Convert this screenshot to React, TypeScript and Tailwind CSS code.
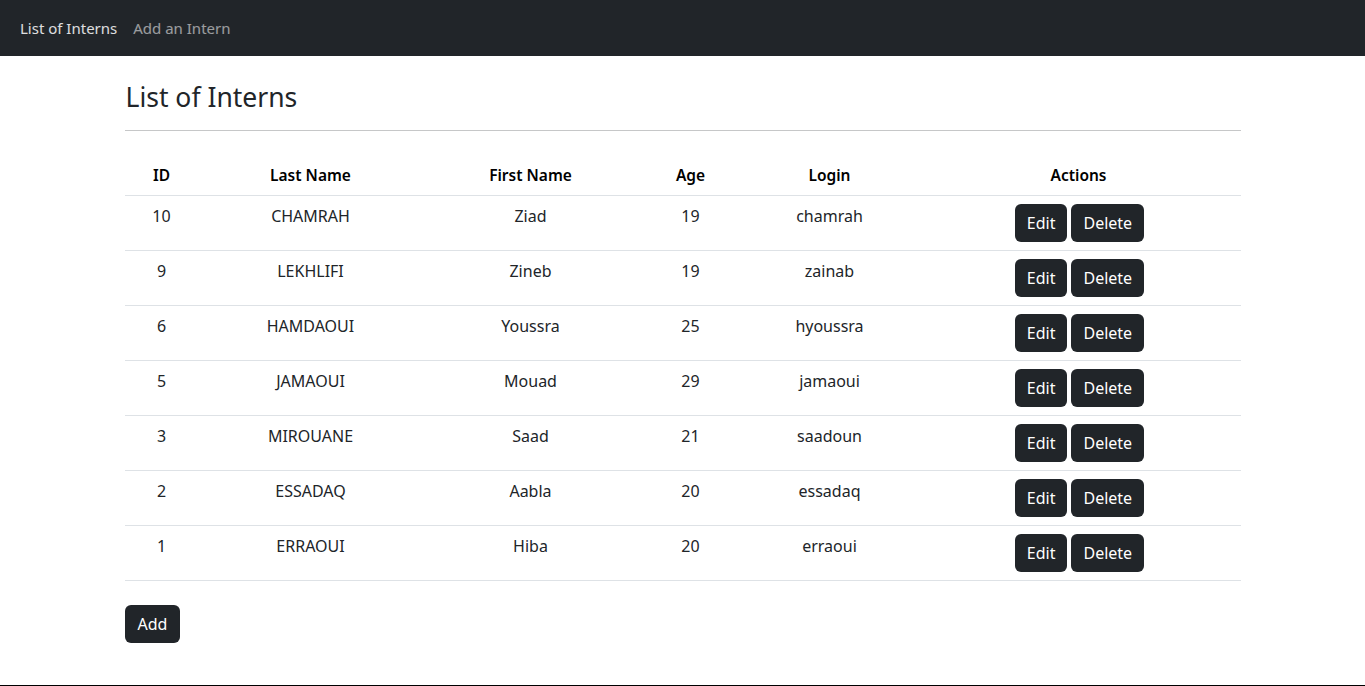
import React from "react";

const interns = [
  { id: 10, last: "CHAMRAH", first: "Ziad", age: 19, login: "chamrah" },
  { id: 9, last: "LEKHLIFI", first: "Zineb", age: 19, login: "zainab" },
  { id: 6, last: "HAMDAOUI", first: "Youssra", age: 25, login: "hyoussra" },
  { id: 5, last: "JAMAOUI", first: "Mouad", age: 29, login: "jamaoui" },
  { id: 3, last: "MIROUANE", first: "Saad", age: 21, login: "saadoun" },
  { id: 2, last: "ESSADAQ", first: "Aabla", age: 20, login: "essadaq" },
  { id: 1, last: "ERRAOUI", first: "Hiba", age: 20, login: "erraoui" },
];

const btn =
  "bg-[#212529] text-white rounded-[6px] px-3 h-[38px] text-[16px] leading-[24px]";

export default function App() {
  return (
    <div
      className="h-[686px] border-b border-black bg-white text-[#212529] text-[16px] leading-[24px]"
      style={{ fontFamily: '"Segoe UI", "Noto Sans", "Open Sans", sans-serif' }}
    >
      <nav className="h-[56px] bg-[#212529] flex items-center px-3 text-[15px]">
        <a className="px-2 text-white/85">List of Interns</a>
        <a className="px-2 text-white/55">Add an Intern</a>
      </nav>
      <div className="w-[1116px] mx-auto">
        <h2 className="mt-[22px] text-[26.5px] leading-[38px] font-normal pl-[1px]">List of Interns</h2>
        <hr className="mt-[14px] border-t border-[#c6c7c8]" />
        <table className="mt-[24px] w-full table-fixed border-collapse text-center">
          <colgroup>
            <col className="w-[74px]" />
            <col className="w-[224px]" />
            <col className="w-[216px]" />
            <col className="w-[104px]" />
            <col className="w-[174px]" />
            <col />
          </colgroup>
          <thead>
            <tr className="border-b border-[#dee2e6]">
              {["ID", "Last Name", "First Name", "Age", "Login", "Actions"].map((h) => (
                <th key={h} className="p-2 font-semibold text-black text-[15.5px]">
                  {h}
                </th>
              ))}
            </tr>
          </thead>
          <tbody>
            {interns.map((r) => (
              <tr key={r.id} className="border-b border-[#dee2e6]">
                <td className="p-2 align-top">{r.id}</td>
                <td className="p-2 align-top">{r.last}</td>
                <td className="p-2 align-top">{r.first}</td>
                <td className="p-2 align-top">{r.age}</td>
                <td className="p-2 align-top">{r.login}</td>
                <td className="p-2 align-top">
                  <div className="flex justify-center gap-[4px] pl-[2px]">
                    <button className={btn}>Edit</button>
                    <button className={btn}>Delete</button>
                  </div>
                </td>
              </tr>
            ))}
          </tbody>
        </table>
        <button className={`${btn} mt-[24px] px-[13px]`}>Add</button>
      </div>
    </div>
  );
}
